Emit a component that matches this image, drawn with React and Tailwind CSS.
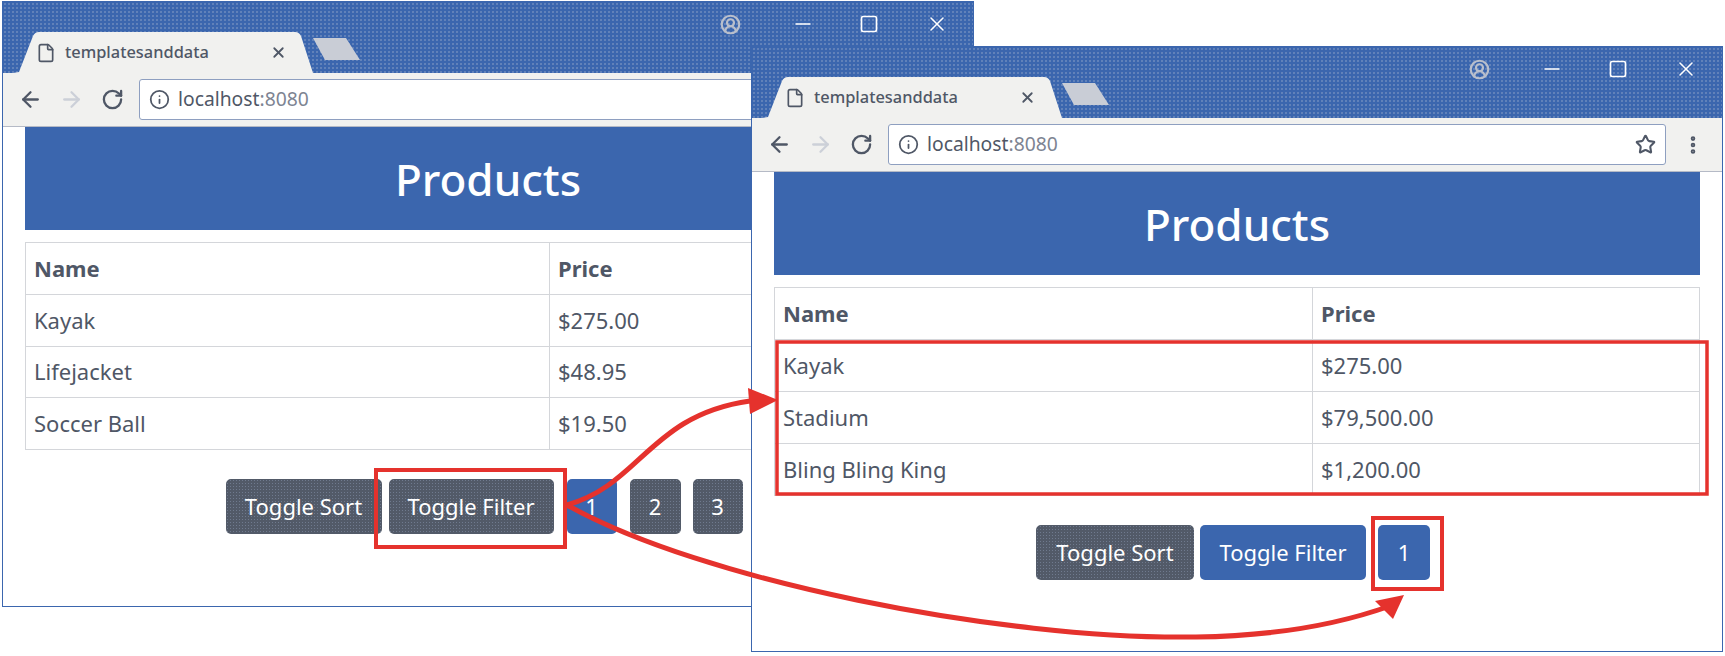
import React from 'react';
import { File, X, ArrowLeft, ArrowRight, RotateCw, Info, Star, EllipsisVertical, Minus, Square, CircleUserRound } from 'lucide-react';

const dotted = 'bg-[radial-gradient(#6484bb_0.7px,transparent_0.8px)] bg-[size:4px_4px]';
const grayDots = 'bg-[radial-gradient(#6f7a8e_0.5px,transparent_0.6px)] bg-[size:3px_3px]';

function Btn({ label, active, className = '' }) {
  return (
    <button className={`h-[55px] rounded-[5px] text-white text-[22px] flex items-center justify-center ${active ? 'bg-[#3b66ae]' : `bg-[#525a68] ${grayDots}`} ${className}`}>
      {label}
    </button>
  );
}

function Cell({ children, head, wide, rowClass }) {
  return (
    <td className={`border border-[#d4d6da] px-2 text-[22px] text-[#4f5766] ${rowClass} ${head ? 'font-bold' : ''}`} style={wide ? { width: wide } : undefined}>
      {children}
    </td>
  );
}

function BrowserWindow({ left, top, z, rows, nameWidth, rowClass, buttonsClass, buttons }) {
  return (
    <div className="absolute w-[972px] h-[606px] bg-white border border-[#3b66ae] flex flex-col" style={{ left, top, zIndex: z }}>
      {/* title bar */}
      <div className="h-[71px] shrink-0 flex bg-[#3b66ae]">
        <div className={`flex-1 flex ${dotted}`}>
          <div className="self-end flex items-center">
            <div className="relative w-[300px] h-[41px] ml-[10px]">
              <svg className="absolute inset-0" width="300" height="41" viewBox="0 0 300 41">
                <path d="M0 41 L6 40 L20 4 Q22 0 26 0 L282 0 Q286 0 288 4 L300 41 Z" fill="#f1f1ef" />
              </svg>
              <div className="relative h-full flex items-center pl-[23px]">
                <File size={20} strokeWidth={2} className="text-[#4f5766]" />
                <span className="ml-[9px] text-[16.4px] font-medium text-[#4f5766] font-['Noto_Sans',sans-serif] w-[198px]">templatesanddata</span>
                <X size={17} strokeWidth={2.5} className="text-[#4f5766] ml-[7px]" />
              </div>
            </div>
            <svg className="mb-[8px]" width="47" height="22" viewBox="0 0 47 22">
              <path d="M0 0 L33 0 L47 22 L12 22 Z" fill="#c9cdd6" />
            </svg>
          </div>
          <div className="ml-auto flex items-center self-start h-[44px] pr-[24px] text-white">
            <CircleUserRound size={21} strokeWidth={2.5} className="text-[#b9bfcc]" />
            <Minus size={24} strokeWidth={1.5} className="ml-[50px]" />
            <Square size={20} strokeWidth={2} className="ml-[44px]" />
            <X size={24} strokeWidth={1.5} className="ml-[46px]" />
          </div>
        </div>
      </div>

      {/* toolbar */}
      <div className="h-[54px] shrink-0 bg-[#f1f1ef] border-b border-[#b5bac6] flex items-center pl-[15px] pr-[18px]">
        <ArrowLeft size={25} strokeWidth={2.2} className="text-[#4f5766]" />
        <ArrowRight size={25} strokeWidth={2.2} className="text-[#ccd0d8] ml-[16px]" />
        <RotateCw size={23} strokeWidth={2.4} className="text-[#4f5766] ml-[17px]" />
        <div className="ml-[15px] flex-1 h-[41px] bg-white border border-[#8e9fc0] rounded-[3px] flex items-center pl-[9px] pr-[9px]">
          <Info size={21} strokeWidth={2} className="text-[#4f5766]" />
          <span className="ml-[8px] text-[19.3px] text-[#4f5766] font-['Noto_Sans',sans-serif]">
            localhost<span className="text-[#7d8492]">:8080</span>
          </span>
          <Star size={21} strokeWidth={2.4} className="ml-auto text-[#4f5766]" />
        </div>
        <EllipsisVertical size={22} strokeWidth={3} className="ml-[16px] text-[#4f5766]" />
      </div>

      {/* page */}
      <div className="flex-1 px-[22px] font-['Noto_Sans',sans-serif]">
        <div className="h-[103px] bg-[#3b66ae] flex items-center justify-center text-white text-[44px] font-medium">Products</div>
        <table className="mt-[12px] w-full border-collapse table-fixed">
          <tbody>
            <tr>
              <Cell head wide={nameWidth} rowClass={rowClass}>Name</Cell>
              <Cell head rowClass={rowClass}>Price</Cell>
            </tr>
            {rows.map(r => (
              <tr key={r[0]}>
                <Cell rowClass={rowClass}>{r[0]}</Cell>
                <Cell rowClass={rowClass}>{r[1]}</Cell>
              </tr>
            ))}
          </tbody>
        </table>
        <div className={`pr-[8px] flex justify-center ${buttonsClass}`}>{buttons}</div>
      </div>
    </div>
  );
}

export default function App() {
  return (
    <div className="relative w-[1725px] h-[656px] bg-white overflow-hidden">
      <BrowserWindow
        left={2}
        top={1}
        z={1}
        nameWidth={524}
        rowClass="h-[51.75px]"
        buttonsClass="mt-[29px]"
        rows={[['Kayak', '$275.00'], ['Lifejacket', '$48.95'], ['Soccer Ball', '$19.50']]}
        buttons={
          <>
            <Btn label="Toggle Sort" className="w-[156px]" />
            <Btn label="Toggle Filter" className="w-[165px] ml-[7px]" />
            <Btn label="1" active className="w-[50px] ml-[13px]" />
            <Btn label="2" className="w-[51px] ml-[13px]" />
            <Btn label="3" className="w-[50px] ml-[12px]" />
          </>
        }
      />
      <BrowserWindow
        left={751}
        top={46}
        z={2}
        nameWidth={538}
        rowClass="h-[52px]"
        buttonsClass="mt-[29px]"
        rows={[['Kayak', '$275.00'], ['Stadium', '$79,500.00'], ['Bling Bling King', '$1,200.00']]}
        buttons={
          <>
            <Btn label="Toggle Sort" className="w-[158px]" />
            <Btn label="Toggle Filter" active className="w-[166px] ml-[6px]" />
            <Btn label="1" active className="w-[52px] ml-[12px]" />
          </>
        }
      />

      {/* callouts */}
      <svg className="absolute inset-0 z-10 pointer-events-none" width="1725" height="656" viewBox="0 0 1725 656" fill="none" stroke="#e5322d">
        <rect x="376" y="470" width="189" height="77" strokeWidth="4" />
        <rect x="777" y="342" width="930" height="152" strokeWidth="3.5" />
        <rect x="1373" y="518" width="69" height="71" strokeWidth="4" />
        <path d="M567 505 C640 485 650 415 750 401" strokeWidth="5" />
        <path d="M567 505 C700 580 1000 640 1196 637 C1280 636 1345 622 1390 606" strokeWidth="5" />
        <path d="M748 388 L778 400 L750 414 Z" fill="#e5322d" stroke="none" />
        <path d="M1404 595 L1375 601 L1393 619 Z" fill="#e5322d" stroke="none" />
      </svg>
    </div>
  );
}
